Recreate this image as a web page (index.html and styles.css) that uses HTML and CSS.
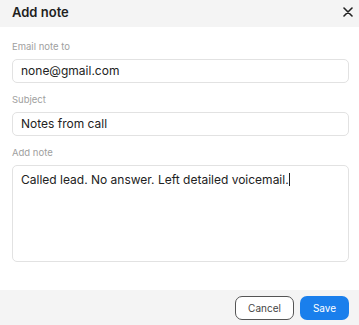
FILE: index.html
```html
<!DOCTYPE html>
<html lang="en">
<head>
    <meta charset="UTF-8">
    <meta name="viewport" content="width=device-width, initial-scale=1.0">
    <title>Add note</title>
    <link rel="stylesheet" href="styles.css">
</head>
<body>
    <div class="modal">
        <div class="modal-header">
            <h1>Add note</h1>
            <button class="close-btn" aria-label="Close">
                <svg width="10" height="10" viewBox="0 0 10 10">
                    <path d="M1 1L9 9M9 1L1 9" stroke="#222" stroke-width="1.6" stroke-linecap="round"/>
                </svg>
            </button>
        </div>

        <div class="modal-body">
            <label class="field-label">Email note to</label>
            <div class="field">none@gmail.com</div>

            <label class="field-label">Subject</label>
            <div class="field">Notes from call</div>

            <label class="field-label">Add note</label>
            <div class="field note">Called lead. No answer. Left detailed voicemail.<span class="caret"></span></div>
        </div>

        <div class="modal-footer">
            <button class="btn cancel">Cancel</button>
            <button class="btn save">Save</button>
        </div>
    </div>
</body>
</html>
```

FILE: styles.css
```css
* {
    margin: 0;
    padding: 0;
    box-sizing: border-box;
    font-family: 'Inter', 'Liberation Sans', sans-serif;
}

body {
    background: #ffffff;
    color: #222;
}

.modal {
    width: 359px;
    height: 325px;
    display: flex;
    flex-direction: column;
}

.modal-header {
    height: 27px;
    background: #f4f4f4;
    display: flex;
    align-items: center;
    justify-content: space-between;
    padding: 0 4px 3px 12px;
}

.modal-header h1 {
    font-size: 13px;
    font-weight: 600;
    color: #1f1f1f;
}

.close-btn {
    background: none;
    border: none;
    width: 14px;
    height: 14px;
    display: flex;
    align-items: center;
    justify-content: center;
}

.modal-body {
    flex: 1;
    padding: 14px 10px 0 12px;
    display: flex;
    flex-direction: column;
}

.field-label {
    font-size: 9.5px;
    line-height: 12px;
    color: #a0a0a0;
    margin-bottom: 6px;
}

.field {
    height: 24px;
    border: 1px solid #e2e2e2;
    border-radius: 5px;
    padding: 0 8px;
    font-size: 12px;
    line-height: 22px;
    color: #222;
    margin-bottom: 11px;
}

.field.note {
    height: 97px;
    padding-top: 6px;
    line-height: 15px;
    margin-bottom: 0;
}

.caret {
    display: inline-block;
    width: 1px;
    height: 13px;
    background: #222;
    vertical-align: -2px;
}

.modal-footer {
    height: 35px;
    background: #f4f4f4;
    display: flex;
    align-items: center;
    justify-content: flex-end;
    gap: 6px;
    padding: 0 10px 0 0;
}

.btn {
    height: 24px;
    border-radius: 7px;
    font-size: 10px;
    cursor: pointer;
}

.cancel {
    width: 59px;
    background: #fff;
    border: 1px solid #555;
    color: #444;
}

.save {
    width: 49px;
    background: #1a7fec;
    border: none;
    color: #fff;
}
```
